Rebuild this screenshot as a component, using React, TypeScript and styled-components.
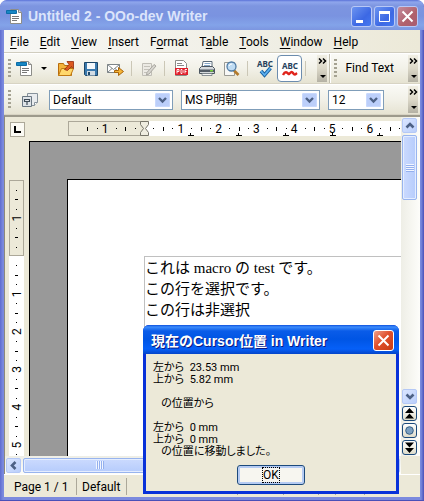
import React from "react";
import styled, { createGlobalStyle, css } from "styled-components";

const uiFont = `Roboto, "Noto Sans CJK JP", sans-serif`;
const beige = "#ece9d8";

const GlobalStyle = createGlobalStyle`
  * { box-sizing: border-box; }
  body { margin: 0; background: #fff; font: 12px/16px ${uiFont}; color: #000; }
  button, select, input { font: inherit; color: inherit; }
`;

const Window = styled.div`
  position: relative;
  height: 100vh;
  display: flex;
  flex-direction: column;
  padding: 0 4px 4px;
  background: linear-gradient(90deg, #5f6cd0 0, #7b8ade 3px, #7b8ade calc(100% - 3px), #4a50b8 100%);
  box-shadow: inset 0 -1px #4a50b8;
  border-radius: 7px 7px 0 0;
  overflow: hidden;
`;

const TitleBar = styled.header`
  flex: none;
  display: flex;
  align-items: center;
  gap: 5px;
  height: 30px;
  margin: 0 -4px;
  padding: 2px 6px 0 6px;
  background: linear-gradient(#5a72d8 0, #8fa6ec 2px, #7d95e0 6px, #7a93e0 16px, #83a3e9 25px, #7c96e0 100%);
  border-radius: 7px 7px 0 0;
`;

const Title = styled.h1`
  flex: 1;
  margin: 0;
  font: bold 14px/18px "Liberation Sans", sans-serif;
  white-space: nowrap;
  color: #dbe4fb;
`;

const CaptionButton = styled.button<{ $close?: boolean; $active?: boolean }>`
  display: grid;
  place-items: center;
  width: 21px;
  height: 21px;
  padding: 0;
  margin-left: ${(p) => (p.$active ? 0 : -3)}px;
  border: 1px solid ${(p) => (p.$active ? "#fff" : "#b8c8f6")};
  border-radius: 3px;
  background: ${(p) =>
    p.$active
      ? "linear-gradient(135deg, #f0a08a, #e0502c 45%, #c83c14)"
      : p.$close
        ? "linear-gradient(135deg, #c48c9c, #b0606c 60%, #a85c70)"
        : "linear-gradient(135deg, #6c94f0, #3c68e4 60%, #4478f0)"};
`;

const MenuBar = styled.nav`
  flex: none;
  display: flex;
  gap: 11px;
  height: 23px;
  padding: 4px 6px 2px;
  background: linear-gradient(90deg, #f7f7f4, #f0efe6 60%, ${beige});
  border-bottom: 1px solid #d0cdbf;
`;

const MenuItem = styled.button`
  padding: 0;
  border: 0;
  background: none;
  font: 12px/16px ${uiFont};
  u { text-underline-offset: 2px; }
`;

const ToolRow = styled.div`
  flex: none;
  display: flex;
  height: 31px;
  border-top: 1px solid #fff;
  border-bottom: 1px solid #d8d4c4;
`;

const Toolbar = styled.div<{ $grow?: boolean; $divided?: boolean }>`
  display: flex;
  align-items: center;
  min-width: 0;
  padding: 0 2px 0 4px;
  background: linear-gradient(#fafaf6, #f2f1e8 50%, #e6e3d2);
  ${(p) => p.$grow && css`flex: 1;`}
  ${(p) => p.$divided && css`border-left: 1px solid #c0bdae; box-shadow: inset 1px 0 #fff;`}
`;

const Grip = styled.span`
  flex: none;
  width: 3px;
  height: 19px;
  background: repeating-linear-gradient(#a5a292 0 2px, transparent 2px 4px);
`;

const ToolButton = styled.button<{ $pressed?: boolean; $width?: number }>`
  flex: none;
  display: flex;
  align-items: center;
  justify-content: center;
  width: ${(p) => p.$width ?? 25}px;
  height: 27px;
  padding: 0;
  border: ${(p) => (p.$pressed ? "1px solid #6c8cae" : "0")};
  border-radius: 4px;
  background: ${(p) => (p.$pressed ? "#fff" : "none")};
`;

const Divider = styled.span`
  flex: none;
  width: 1px;
  height: 15px;
  margin: 0 4px 0 3px;
  background: #cbc7b6;
`;

const Spacer = styled.span`
  flex: 1;
`;

const Overflow = styled.button`
  flex: none;
  display: grid;
  place-items: center;
  width: 10px;
  height: 27px;
  padding: 0;
  border: 0;
  background: linear-gradient(#f1efe4, #dcd8c8 50%, #b4b1a4);
`;

const FindButton = styled.button`
  padding: 0;
  margin: 0 14px 2px 8px;
  border: 0;
  background: none;
  white-space: nowrap;
`;

const Combo = styled.span<{ $width: number }>`
  position: relative;
  flex: none;
  display: flex;
  width: ${(p) => p.$width}px;
  height: 20px;
  margin-right: 8px;
  border: 1px solid #7f9db9;
  background: #fff;
  svg { position: absolute; right: 2px; top: 2px; pointer-events: none; }
`;

const Select = styled.select`
  flex: 1;
  min-width: 0;
  padding: 0 18px 0 3px;
  border: 0;
  background: none;
  appearance: none;
  font: 12px/18px ${uiFont};
`;

const Workspace = styled.main`
  flex: 1;
  min-height: 0;
  display: grid;
  grid-template-columns: 24px minmax(0, 1fr) 19px;
  grid-template-rows: 24px minmax(0, 1fr) 18px;
  background: ${beige};
  border-top: 2px solid #9d9a8c;
  border-left: 1px solid #8c897c;
`;

const Corner = styled.div`
  display: grid;
  place-items: center;
`;

const TabButton = styled.button`
  display: grid;
  place-items: center;
  width: 15px;
  height: 15px;
  padding: 0;
  border: 1px solid #aca899;
  background: #fbfaf3;
`;

const HRuler = styled.div`
  overflow: hidden;
  padding: 4px 0 0 39px;
`;

const VRuler = styled.div`
  overflow: hidden;
  padding: 39px 0 0 4px;
`;

const Drawing = styled.svg`
  display: block;
  font: 12px ${uiFont};
`;

const Canvas = styled.div`
  overflow: hidden;
  padding: 37px 0 0 37px;
  background: #999;
  border: solid #000;
  border-width: 1px 0 0 1px;
`;

const Page = styled.article`
  height: 100%;
  padding: 76px 0 0 76px;
  background: #fff;
  border: solid #000;
  border-width: 1px 0 0 1px;
`;

const TextArea = styled.div`
  height: 100%;
  padding-top: 1px;
  border: solid #c0c0c0;
  border-width: 1px 0 0 1px;
  font: 15px/21px "Liberation Serif", "Noto Sans CJK JP", serif;
  white-space: nowrap;
`;

const Paragraph = styled.p`
  margin: 0;
`;

const VScroll = styled.div`
  grid-row: 1 / 3;
  grid-column: 3;
  display: flex;
  flex-direction: column;
  align-items: center;
  gap: 2px;
  padding: 1px 2px 1px 0;
  background: linear-gradient(90deg, #eeeee6, #fdfdfa);
`;

const HScroll = styled.div`
  grid-column: 1 / 3;
  display: flex;
  align-items: center;
  gap: 2px;
  padding: 0 1px;
  background: linear-gradient(#eeeee6, #fdfdfa);
`;

const ScrollButton = styled.button`
  flex: none;
  display: grid;
  place-items: center;
  width: 15px;
  height: 15px;
  padding: 0;
  border: 1px solid #b4c8f6;
  border-radius: 2px;
  background: linear-gradient(135deg, #dbe6ff, #b9cefb);
`;

const Thumb = styled.div<{ $vertical?: boolean }>`
  flex: none;
  display: grid;
  place-items: center;
  width: ${(p) => (p.$vertical ? "15px" : "153px")};
  height: ${(p) => (p.$vertical ? "65px" : "15px")};
  border: 1px solid #98b4ee;
  box-shadow: inset 0 0 0 1px #e4edff;
  border-radius: 2px;
  background: linear-gradient(${(p) => (p.$vertical ? "90deg" : "180deg")}, #cbdafe, #b6ccfc);
`;

const ThumbGrip = styled.span<{ $vertical?: boolean }>`
  width: 8px;
  height: 8px;
  background: repeating-linear-gradient(
    ${(p) => (p.$vertical ? "180deg" : "90deg")}, #f2f6ff 0 1px, #94b0ee 1px 2px);
`;

const NavButton = styled.button`
  flex: none;
  display: grid;
  place-items: center;
  width: 15px;
  height: 15px;
  padding: 0;
  border: 1px solid #1c4a7c;
  border-radius: 3px;
  background: linear-gradient(#fff, #dedccb);
`;

const StatusBar = styled.footer`
  flex: none;
  display: flex;
  height: 23px;
  padding: 3px 0 2px 5px;
  background: ${beige};
  border-top: 1px solid #fff;
  white-space: nowrap;
`;

const StatusCell = styled.span<{ $width: number }>`
  flex: none;
  width: ${(p) => p.$width}px;
  padding-left: 5px;
  border-right: 1px solid #aca899;
  line-height: 18px;
`;

const Dialog = styled.section`
  position: absolute;
  left: 143px;
  top: 325px;
  width: 256px;
  display: flex;
  flex-direction: column;
  padding: 0 3px 3px;
  background: #0831d9;
  border-radius: 6px 6px 0 0;
  overflow: hidden;
`;

const DialogTitle = styled.header`
  display: flex;
  align-items: center;
  height: 29px;
  margin: 0 -3px;
  padding: 2px 5px 0 8px;
  background: linear-gradient(#0c50dc 0, #3c8cfc 2px, #0a5ce8 6px, #0055e4 14px, #0660f8 24px, #0444c8 100%);
  h2 {
    flex: 1;
    margin: 0;
    font: bold 14px/18px "Liberation Sans", "Noto Sans CJK JP", sans-serif;
    color: #fff;
    text-shadow: 1px 1px #0a1883;
    white-space: nowrap;
  }
`;

const DialogBody = styled.div`
  display: flex;
  flex-direction: column;
  align-items: center;
  gap: 7px;
  padding: 8px 7px 6px;
  background: ${beige};
`;

const Message = styled.p`
  align-self: stretch;
  margin: 0;
  font: 11px/12px ${uiFont};
  font-feature-settings: "palt";
  white-space: pre;
`;

const OkButton = styled.button`
  width: 68px;
  height: 20px;
  padding: 0;
  border: 1px solid #1c4a7c;
  border-radius: 3px;
  background: #f7f6f0;
  box-shadow: inset 0 0 0 2px #b5cbf3;
  line-height: 14px;
  span { outline: 1px dotted #000; }
`;

const chevrons = {
  down: "M1.5 2.5L5 6L8.5 2.5",
  up: "M1.5 6.5L5 3L8.5 6.5",
  left: "M6.5 1L3 4.5L6.5 8",
};

const Chevron = ({ dir }: { dir: keyof typeof chevrons }) => (
  <svg width="10" height="9" viewBox="0 0 10 9">
    <path d={chevrons[dir]} fill="none" stroke="#4d6185" strokeWidth="2.6" />
  </svg>
);

const ComboArrow = () => (
  <svg width="15" height="14" viewBox="0 0 15 14">
    <rect width="15" height="14" rx="1.5" fill="#bccffa" />
    <rect x="0.5" y="0.5" width="14" height="13" rx="1.5" fill="none" stroke="#c9d9fd" />
    <path d="M4 5L7.5 8.5L11 5" fill="none" stroke="#4d6185" strokeWidth="2.4" />
  </svg>
);

const OverflowGlyph = () => (
  <svg width="9" height="24" viewBox="0 0 9 24">
    <path d="M1 1.5L3.5 4L1 6.5M5 1.5L7.5 4L5 6.5" fill="none" stroke="#000" strokeWidth="1.5" />
    <path d="M2 18h6L5 21z" />
  </svg>
);

const DocumentIcon = () => (
  <svg width="17" height="17" viewBox="0 0 17 17">
    <path d="M4.5 1.5h8l3 3v11h-11z" fill="#fff" stroke="#8c8c88" />
    <path d="M12.5 1.5v3h3" fill="#ddd" stroke="#8c8c88" />
    <path d="M0.5 2.5h10v3H.5z" fill="#1787c4" stroke="#0c6da8" />
    <path d="M6 8.5h7M6 10.5h7M6 12.5h5" stroke="#777" />
  </svg>
);

const OpenIcon = () => (
  <svg width="18" height="17" viewBox="0 0 18 17">
    <path d="M1.5 15.5v-12h5l1 2h7v10z" fill="#f3b43c" stroke="#b96c0c" />
    <path d="M1.5 15.5l3-7h12l-3 7z" fill="#ffd86c" stroke="#c07a14" />
    <path d="M7.5 9.5L12 4.5l-2-3h6.5v7l-2-2-4 4z" fill="#dc5a20" stroke="#93290c" strokeWidth=".8" />
  </svg>
);

const SaveIcon = () => (
  <svg width="16" height="16" viewBox="0 0 16 16">
    <path d="M1.5 1.5h13v13h-12l-1-1z" fill="#3b7aae" stroke="#1c4668" />
    <path d="M4 2h8v6H4z" fill="#f4f8fb" />
    <path d="M4 10h8v4.5H4z" fill="#d2dce4" />
    <path d="M5 11h2v3H5z" fill="#1c4668" />
  </svg>
);

const MailIcon = () => (
  <svg width="17" height="16" viewBox="0 0 17 16">
    <path d="M.5 3.5h12v8H.5z" fill="#fff" stroke="#7e8588" />
    <path d="M.5 3.5l6 5 6-5M.5 11.5L5 7.5M12.5 11.5L8 7.5" fill="none" stroke="#7e8588" />
    <path d="M7.5 9.5h4v-3l5 4-5 4v-3h-4z" fill="#f5b537" stroke="#a9650b" />
  </svg>
);

const EditIcon = () => (
  <svg width="16" height="16" viewBox="0 0 16 16">
    <path d="M1.5 2.5h9v12h-9z" fill="#eceae4" stroke="#c0beb6" />
    <path d="M3 5.5h6M3 8.5h5M3 11.5h3" stroke="#c4c2ba" />
    <path d="M6 11.5l7-8 2 1.5-7 8-2.5 1z" fill="#d8d6d0" stroke="#a9a7a0" />
  </svg>
);

const PdfIcon = () => (
  <svg width="15" height="17" viewBox="0 0 15 17">
    <path d="M1.5 .5h8l3 3v12h-11z" fill="#fff" stroke="#8c8c88" />
    <path d="M3 3.5h5M3 5.5h7" stroke="#888" />
    <path d="M1 8h13v7H1z" fill="#e0202c" />
    <path d="M3 13.5v-4h2v2h-2M7 9.5v4h1l1-1v-2l-1-1zM11 13.5v-4h2M11 11.5h1.5" fill="none" stroke="#fff" strokeWidth=".9" />
  </svg>
);

const PrintIcon = () => (
  <svg width="18" height="17" viewBox="0 0 18 17">
    <path d="M5 1.5h9v6H4z" fill="#fff" stroke="#5b6a78" />
    <path d="M6.5 3.5h6M6 5.5h6" stroke="#85a6c6" />
    <path d="M1.5 8.5l2-2h11l2 2v5h-15z" fill="#d5d9dc" stroke="#4c5660" />
    <path d="M2 9.5h14v2.5H2z" fill="#535c66" />
    <path d="M12 10h3v1.5h-3z" fill="#78d23c" />
    <path d="M4 13.5h10v2H4z" fill="#f6f6f6" stroke="#70787f" strokeWidth=".8" />
  </svg>
);

const PreviewIcon = () => (
  <svg width="17" height="17" viewBox="0 0 17 17">
    <path d="M1.5 2.5h10v13h-10z" fill="#f8f8f6" stroke="#9a9a94" />
    <path d="M11 10.5l4.5 4.5" stroke="#b37a2c" strokeWidth="2.6" />
    <circle cx="8.5" cy="6.5" r="4.5" fill="#bfdcf3" stroke="#4f7ba5" strokeWidth="1.3" />
    <path d="M6 6a3 3 0 013-2" fill="none" stroke="#fff" />
  </svg>
);

const Abc = styled.text`
  font: bold 8px "Noto Sans", sans-serif;
  fill: #26415c;
`;

const SpellIcon = () => (
  <svg width="18" height="20" viewBox="0 0 18 20">
    <Abc x="1" y="8">ABC</Abc>
    <path d="M5 12l3.5 4 6-7" fill="none" stroke="#1c64a4" strokeWidth="3.6" />
    <path d="M5 12l3.5 4 6-7" fill="none" stroke="#5cb0f0" strokeWidth="1.8" />
  </svg>
);

const AutoSpellIcon = () => (
  <svg width="18" height="20" viewBox="0 0 18 20">
    <Abc x="1" y="10">ABC</Abc>
    <path d="M2 16c2.5-5 4.5-2 5.5-1s2.5-4 4.5-1 2.5 1 4 0" fill="none" stroke="#e0241c" strokeWidth="2.4" />
  </svg>
);

const StylesIcon = () => (
  <svg width="18" height="18" viewBox="0 0 18 18">
    <path d="M6.5 2.5h10v9l-3 3h-7z" fill="#e9ecee" stroke="#87929b" />
    <path d="M16.5 11.5h-3v3" fill="#fff" stroke="#87929b" />
    <path d="M1.5 5.5h9v10h-9z" fill="#dfe4e8" stroke="#6a7782" />
    <path d="M3.5 8.5h5v2h-5zM6 10.5v3.5" fill="none" stroke="#3e4b56" strokeWidth="1.2" />
  </svg>
);

const CloseGlyph = () => (
  <svg width="13" height="13" viewBox="0 0 13 13">
    <path d="M1.5 1.5l10 10M11.5 1.5l-10 10" stroke="#fff" strokeWidth="2" />
  </svg>
);

const unit = 37.8;
const subTicks = (from: number, to: number) => {
  const out: { at: number; half: boolean }[] = [];
  for (let i = from; i <= to; i++) {
    if (i % 4 !== 0) out.push({ at: Math.round((i * unit) / 4), half: i % 2 === 0 });
  }
  return out;
};

const HorizontalRuler = () => (
  <Drawing width="100%" height="20">
    <rect x="76" width="100%" height="15" fill="#fff" />
    <rect x="0.5" y="0.5" width="75" height="14" fill={beige} stroke="#aca899" />
    {subTicks(-6, 27).map(({ at, half }) => (
      <rect key={at} x={76 + at} y={half ? 6 : 7} width="1" height={half ? 4 : 1} />
    ))}
    {[-1, 1, 2, 3, 4, 5, 6].map((n) => (
      <text key={n} x={75 + n * unit} y="12" textAnchor="middle">{Math.abs(n)}</text>
    ))}
    {[123, 171, 218, 265, 312].map((x) => (
      <path key={x} d={`M${x - 3} 14.5h6M${x - 0.5} 12v3`} stroke="#000" />
    ))}
    <path d="M72.5 .5h8v3l-3 4 3 4v3h-8v-3l3-4-3-4z" fill="#efede0" stroke="#77756a" />
  </Drawing>
);

const VerticalRuler = () => (
  <Drawing width="15" height="300">
    <rect y="76" width="15" height="224" fill="#fff" />
    <rect x="0.5" y="0.5" width="14" height="75" fill={beige} stroke="#aca899" />
    {subTicks(-7, 23).map(({ at, half }) => (
      <rect key={at} x={half ? 6 : 7} y={76 + at} width={half ? 3 : 1} height="1" />
    ))}
    {[-1, 1, 2, 3, 4, 5].map((n) => (
      <text key={n} transform={`translate(12 ${76 + n * unit}) rotate(-90)`} textAnchor="middle">{Math.abs(n)}</text>
    ))}
  </Drawing>
);

const menus = ["_File", "_Edit", "_View", "_Insert", "F_ormat", "T_able", "_Tools", "_Window", "_Help"];

const MenuLabel = ({ text }: { text: string }) => {
  const i = text.indexOf("_");
  return <>{text.slice(0, i)}<u>{text[i + 1]}</u>{text.slice(i + 2)}</>;
};

const combos = [
  { label: "Apply Style", value: "Default", width: 124 },
  { label: "Font Name", value: "MS P明朝", width: 139 },
  { label: "Font Size", value: "12", width: 56 },
];

const message = `左から  23.53 mm
上から  5.82 mm

   の位置から

左から  0 mm
上から  0 mm
   の位置に移動しました。`;

export default function App() {
  return (
    <>
      <GlobalStyle />
      <Window>
        <TitleBar>
          <DocumentIcon />
          <Title>Untitled 2 - OOo-dev Writer</Title>
          <CaptionButton aria-label="Minimize">
            <svg width="13" height="13"><path d="M1 10h7v3H1z" fill="#fff" /></svg>
          </CaptionButton>
          <CaptionButton aria-label="Maximize">
            <svg width="13" height="13"><path d="M1.5 2.5h10v9h-10z" fill="none" stroke="#fff" /><path d="M1 1h11v3H1z" fill="#fff" /></svg>
          </CaptionButton>
          <CaptionButton $close aria-label="Close"><CloseGlyph /></CaptionButton>
        </TitleBar>
        <MenuBar>
          {menus.map((m) => <MenuItem key={m}><MenuLabel text={m} /></MenuItem>)}
        </MenuBar>
        <ToolRow>
          <Toolbar $grow>
            <Grip />
            <ToolButton $width={42} aria-label="New">
              <DocumentIcon />
              <svg width="15" height="8"><path d="M8 2h6L11 5z" /></svg>
            </ToolButton>
            <ToolButton aria-label="Open"><OpenIcon /></ToolButton>
            <ToolButton aria-label="Save"><SaveIcon /></ToolButton>
            <ToolButton aria-label="E-mail"><MailIcon /></ToolButton>
            <Divider />
            <ToolButton aria-label="Edit File" disabled><EditIcon /></ToolButton>
            <Divider />
            <ToolButton aria-label="Export as PDF"><PdfIcon /></ToolButton>
            <ToolButton aria-label="Print"><PrintIcon /></ToolButton>
            <ToolButton aria-label="Page Preview"><PreviewIcon /></ToolButton>
            <Divider />
            <ToolButton aria-label="Spellcheck"><SpellIcon /></ToolButton>
            <ToolButton $pressed aria-label="AutoSpellcheck"><AutoSpellIcon /></ToolButton>
            <Divider />
            <Spacer />
            <Overflow aria-label="More tools"><OverflowGlyph /></Overflow>
          </Toolbar>
          <Toolbar $divided>
            <Grip />
            <FindButton>Find Text</FindButton>
            <Overflow aria-label="More find tools"><OverflowGlyph /></Overflow>
          </Toolbar>
        </ToolRow>
        <ToolRow>
          <Toolbar $grow>
            <Grip />
            <ToolButton $width={38} aria-label="Styles and Formatting"><StylesIcon /></ToolButton>
            {combos.map((c) => (
              <Combo key={c.label} $width={c.width}>
                <Select aria-label={c.label} defaultValue={c.value}><option>{c.value}</option></Select>
                <ComboArrow />
              </Combo>
            ))}
            <Spacer />
            <Overflow aria-label="More formatting"><OverflowGlyph /></Overflow>
          </Toolbar>
        </ToolRow>
        <Workspace>
          <Corner>
            <TabButton aria-label="Left tab">
              <svg width="7" height="7"><path d="M1 0v6h6" fill="none" stroke="#000" strokeWidth="2" /></svg>
            </TabButton>
          </Corner>
          <HRuler><HorizontalRuler /></HRuler>
          <VRuler><VerticalRuler /></VRuler>
          <Canvas>
            <Page>
              <TextArea>
                <Paragraph>これは macro の test です。</Paragraph>
                <Paragraph>この行を選択です。</Paragraph>
                <Paragraph>この行は非選択</Paragraph>
              </TextArea>
            </Page>
          </Canvas>
          <VScroll>
            <ScrollButton aria-label="Scroll up"><Chevron dir="up" /></ScrollButton>
            <Thumb $vertical><ThumbGrip $vertical /></Thumb>
            <Spacer />
            <ScrollButton aria-label="Scroll down"><Chevron dir="down" /></ScrollButton>
            <NavButton aria-label="Previous page">
              <svg width="9" height="11"><path d="M4.5 0L9 5H0zM4.5 5.5L9 10.5H0z" /></svg>
            </NavButton>
            <NavButton aria-label="Navigation">
              <svg width="9" height="9"><circle cx="4.5" cy="4.5" r="3.8" fill="#7b9fc0" stroke="#365f86" /></svg>
            </NavButton>
            <NavButton aria-label="Next page">
              <svg width="9" height="11"><path d="M0 .5h9l-4.5 5zM0 6h9l-4.5 5z" /></svg>
            </NavButton>
          </VScroll>
          <HScroll>
            <ScrollButton aria-label="Scroll left"><Chevron dir="left" /></ScrollButton>
            <Thumb><ThumbGrip /></Thumb>
            <Spacer />
            <ScrollButton aria-label="Scroll right" />
          </HScroll>
        </Workspace>
        <StatusBar>
          <StatusCell $width={68}>Page 1 / 1</StatusCell>
          <StatusCell $width={50}>Default</StatusCell>
          <StatusCell $width={111} />
          <StatusCell $width={46} />
          <StatusCell $width={35} />
          <StatusCell $width={17} />
          <StatusCell $width={29} />
        </StatusBar>
        <Dialog role="dialog" aria-labelledby="dialog-title">
          <DialogTitle>
            <h2 id="dialog-title">現在のCursor位置 in Writer</h2>
            <CaptionButton $active aria-label="Close dialog"><CloseGlyph /></CaptionButton>
          </DialogTitle>
          <DialogBody>
            <Message>{message}</Message>
            <OkButton><span>OK</span></OkButton>
          </DialogBody>
        </Dialog>
      </Window>
    </>
  );
}
